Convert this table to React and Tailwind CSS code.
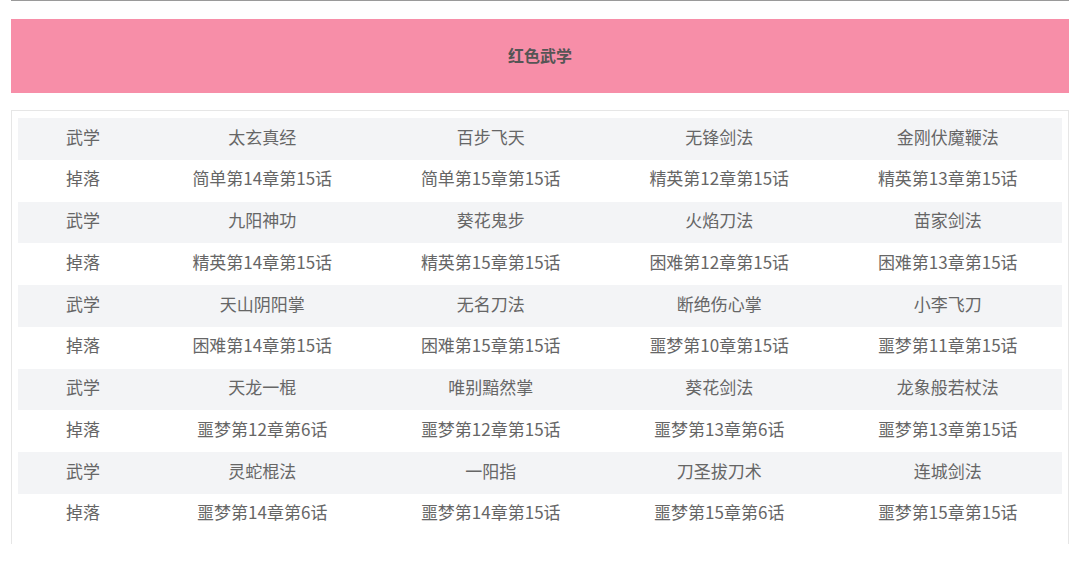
import React from "react";

const rows = [
  ["武学", "太玄真经", "百步飞天", "无锋剑法", "金刚伏魔鞭法"],
  ["掉落", "简单第14章第15话", "简单第15章第15话", "精英第12章第15话", "精英第13章第15话"],
  ["武学", "九阳神功", "葵花鬼步", "火焰刀法", "苗家剑法"],
  ["掉落", "精英第14章第15话", "精英第15章第15话", "困难第12章第15话", "困难第13章第15话"],
  ["武学", "天山阴阳掌", "无名刀法", "断绝伤心掌", "小李飞刀"],
  ["掉落", "困难第14章第15话", "困难第15章第15话", "噩梦第10章第15话", "噩梦第11章第15话"],
  ["武学", "天龙一棍", "唯别黯然掌", "葵花剑法", "龙象般若杖法"],
  ["掉落", "噩梦第12章第6话", "噩梦第12章第15话", "噩梦第13章第6话", "噩梦第13章第15话"],
  ["武学", "灵蛇棍法", "一阳指", "刀圣拔刀术", "连城剑法"],
  ["掉落", "噩梦第14章第6话", "噩梦第14章第15话", "噩梦第15章第6话", "噩梦第15章第15话"],
];

export default function App() {
  return (
    <div
      className="w-[1080px] h-[561px] bg-white overflow-hidden px-[11px]"
      style={{ fontFamily: '"Noto Sans CJK SC", "Noto Sans", sans-serif' }}
    >
      <div className="h-px bg-[#9a9a9a]" />
      <div className="mt-[18px] h-[74px] bg-[#f78ea8] flex items-center justify-center pb-[2px]">
        <span className="text-[16px] font-bold text-[#555]">红色武学</span>
      </div>
      <div className="mt-[17px] border border-b-0 border-[#e6e6e6] pt-[7px] px-[6px] pb-[8px] h-[434px]">
        {rows.map((r, i) => (
          <div
            key={i}
            className={`flex h-[41.75px] items-center pb-[5px] text-[17px] text-[#666] ${i % 2 === 0 ? "bg-[#f3f4f6]" : "bg-white"}`}
          >
            <div className="w-[130px] text-center">{r[0]}</div>
            {r.slice(1).map((c, j) => (
              <div key={j} className="flex-1 text-center">
                {c}
              </div>
            ))}
          </div>
        ))}
      </div>
    </div>
  );
}
